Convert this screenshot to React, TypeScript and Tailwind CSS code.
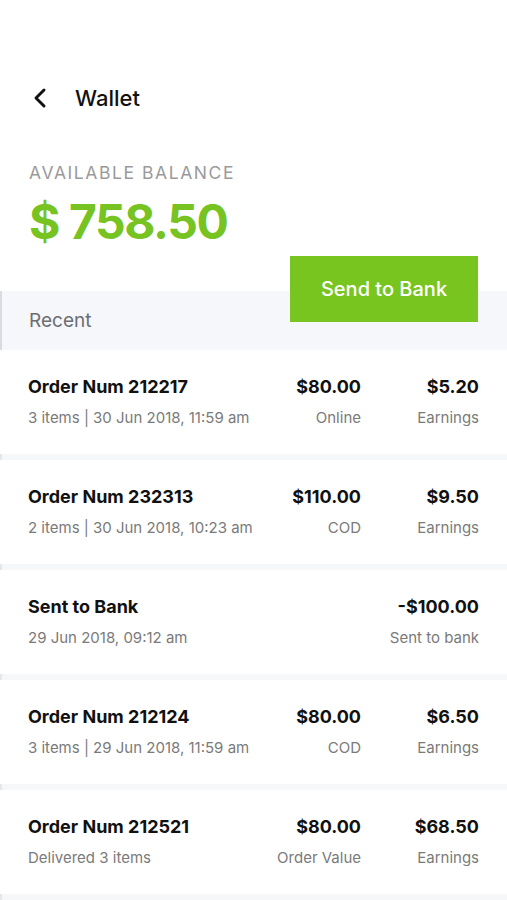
import React from 'react';

type Row = {
  title: string;
  sub: string;
  amount?: string;
  amountLabel?: string;
  value: string;
  valueLabel: string;
};

const rows: Row[] = [
  { title: 'Order Num 212217', sub: '3 items | 30 Jun 2018, 11:59 am', amount: '$80.00', amountLabel: 'Online', value: '$5.20', valueLabel: 'Earnings' },
  { title: 'Order Num 232313', sub: '2 items | 30 Jun 2018, 10:23 am', amount: '$110.00', amountLabel: 'COD', value: '$9.50', valueLabel: 'Earnings' },
  { title: 'Sent to Bank', sub: '29 Jun 2018, 09:12 am', value: '-$100.00', valueLabel: 'Sent to bank' },
  { title: 'Order Num 212124', sub: '3 items | 29 Jun 2018, 11:59 am', amount: '$80.00', amountLabel: 'COD', value: '$6.50', valueLabel: 'Earnings' },
  { title: 'Order Num 212521', sub: 'Delivered 3 items', amount: '$80.00', amountLabel: 'Order Value', value: '$68.50', valueLabel: 'Earnings' },
];

const App: React.FC = () => {
  return (
    <div className="w-[507px] h-[900px] overflow-hidden bg-white font-['Inter',sans-serif]">
      {/* header */}
      <div className="flex items-center h-[60px] mt-[68px] pl-[31px]">
        <svg width="18" height="22" viewBox="0 0 18 22" fill="none">
          <path d="M13 3 L5 11 L13 19" stroke="#111" strokeWidth="3" strokeLinecap="round" strokeLinejoin="round" />
        </svg>
        <span className="ml-[26px] text-[22px] font-medium text-[#111]">Wallet</span>
      </div>

      {/* balance */}
      <div className="pl-[29px] mt-[36px]">
        <div className="text-[17.5px] tracking-[0.09em] text-[#9a9a9a] leading-none">AVAILABLE BALANCE</div>
        <div className="mt-[16px] text-[48px] font-bold text-[#76c322] leading-none tracking-[-0.03em]">$ 758.50</div>
      </div>

      {/* recent band with overlapping button */}
      <div className="relative mt-[45px] h-[59px] bg-[#f5f7fa] border-l-2 border-[#d9dbe0] flex items-end pb-[14px] pl-[27px]">
        <span className="text-[19px] text-[#6b6e73]">Recent</span>
        <button className="absolute right-[29px] top-[-35px] w-[188px] h-[66px] bg-[#79c51f] text-white text-[20px] font-medium">
          Send to Bank
        </button>
      </div>

      {/* list */}
      <div className="flex flex-col">
        {rows.map((r) => (
          <div key={r.title} className="flex flex-col">
            <div className="h-[104px] flex items-center px-[28px]">
              <div className="flex-1 flex flex-col gap-[14px]">
                <span className="text-[18px] font-bold text-[#111] leading-none">{r.title}</span>
                <span className="text-[15px] text-[#7a7a7a] leading-none">{r.sub}</span>
              </div>
              {r.amount && (
                <div className="flex flex-col items-end gap-[14px]">
                  <span className="text-[18px] font-bold text-[#111] leading-none">{r.amount}</span>
                  <span className="text-[15px] text-[#7a7a7a] leading-none">{r.amountLabel}</span>
                </div>
              )}
              <div className="w-[118px] flex flex-col items-end gap-[14px]">
                <span className="text-[18px] font-bold text-[#111] leading-none">{r.value}</span>
                <span className="text-[15px] text-[#7a7a7a] leading-none whitespace-nowrap">{r.valueLabel}</span>
              </div>
            </div>
            <div className="h-[6px] bg-[#f6f7f9] border-l-2 border-[#e6e7ea]" />
          </div>
        ))}
      </div>
    </div>
  );
};

export default App;
